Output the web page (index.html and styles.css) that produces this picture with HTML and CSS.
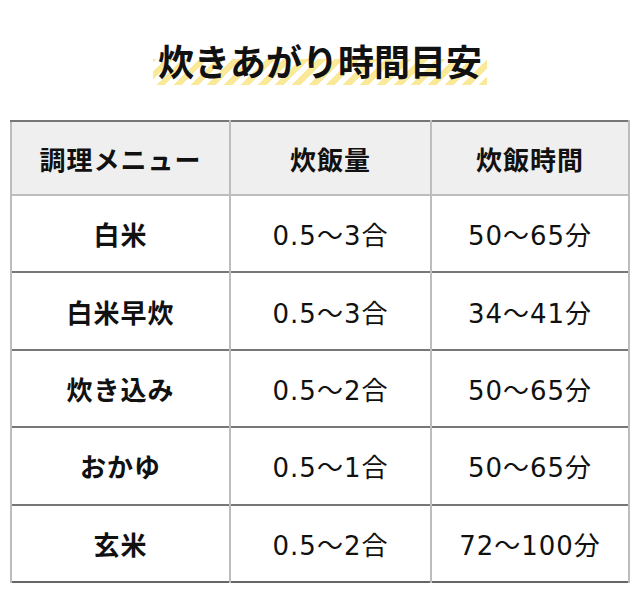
FILE: index.html
```
<!DOCTYPE html>
<html lang="ja">
<head>
<meta charset="utf-8">
<link rel="stylesheet" href="styles.css">
</head>
<body>
<div class="page">
  <div class="title-wrap">
    <h1 class="title">炊きあがり時間目安</h1>
  </div>
  <table class="tbl">
    <thead>
      <tr><th class="c1">調理メニュー</th><th class="c2">炊飯量</th><th class="c3">炊飯時間</th></tr>
    </thead>
    <tbody>
      <tr><th>白米</th><td>0.5～3合</td><td>50～65分</td></tr>
      <tr><th>白米早炊</th><td>0.5～3合</td><td>34～41分</td></tr>
      <tr><th>炊き込み</th><td>0.5～2合</td><td>50～65分</td></tr>
      <tr><th>おかゆ</th><td>0.5～1合</td><td>50～65分</td></tr>
      <tr><th>玄米</th><td>0.5～2合</td><td>72～100分</td></tr>
    </tbody>
  </table>
</div>
</body>
</html>
```
FILE: styles.css
```
html, body { margin: 0; padding: 0; background: #fff; }
.page {
  width: 640px;
  height: 592px;
  padding: 0 10px;
  box-sizing: border-box;
  font-family: "Noto Sans CJK JP", sans-serif;
  color: #111;
}
.title-wrap {
  height: 120px;
  display: flex;
  justify-content: center;
  align-items: flex-start;
}
.title {
  margin: 35px 0 0;
  padding: 0 5px;
  font-size: 36px;
  line-height: 50px;
  font-weight: 700;
  letter-spacing: 0;
  background-image: repeating-linear-gradient(-45deg, #fbe99a 0 6px, #fff 6px 12px);
  background-size: 100% 26px;
  background-position: left bottom;
  background-repeat: no-repeat;
}
.tbl {
  width: 620px;
  border-collapse: collapse;
  border: 2px solid #666;
  table-layout: fixed;
}
.tbl th, .tbl td {
  text-align: center;
  vertical-align: middle;
  padding: 0;
  font-size: 26px;
  border-left: 2px solid #bdbdbd;
  border-right: 2px solid #bdbdbd;
  border-top: 2px solid #777;
}
.tbl th { letter-spacing: 1px; font-weight: 700; }
.tbl thead th {
  background: #efefef;
  height: 72px;
  border-bottom: 2px solid #bdbdbd;
}
.tbl tbody tr { height: 77.4px; }
.tbl td {
  font-weight: 400;
  font-family: "DejaVu Sans", "Noto Sans CJK JP", sans-serif;
  letter-spacing: 1px;
}
.c1 { width: 217px; }
.c2 { width: 199px; }
```
